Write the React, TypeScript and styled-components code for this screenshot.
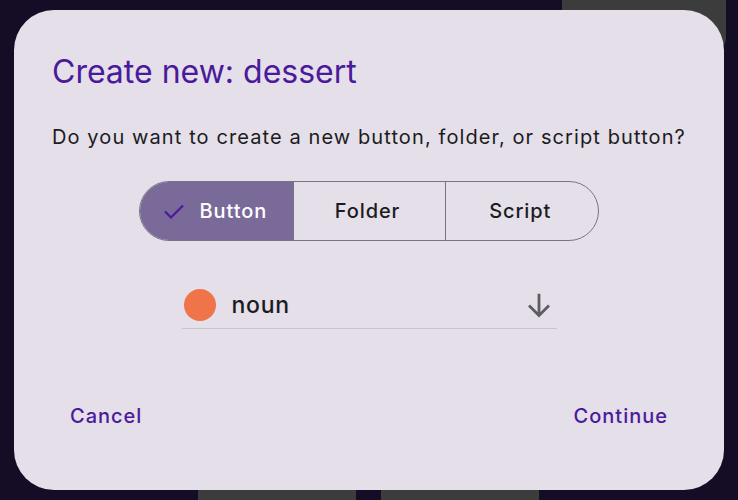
import React, { useState } from "react";
import styled, { createGlobalStyle } from "styled-components";

const GlobalStyle = createGlobalStyle`
  html, body {
    margin: 0;
    padding: 0;
    background: #150d26;
  }
  body {
    font-family: Inter, Roboto, "Liberation Sans", sans-serif;
  }
`;

const Screen = styled.div`
  position: relative;
  width: 738px;
  height: 500px;
  overflow: hidden;
  background: #150d26;
`;

// tiles of the page behind the dialog
const Tile = styled.div<{ $left: number; $top: number; $w: number; $h: number }>`
  position: absolute;
  left: ${(p) => p.$left}px;
  top: ${(p) => p.$top}px;
  width: ${(p) => p.$w}px;
  height: ${(p) => p.$h}px;
  background: #3c3c3c;
  border-radius: 12px;
`;

const Dialog = styled.div`
  position: absolute;
  left: 14px;
  top: 10px;
  width: 710px;
  height: 480px;
  box-sizing: border-box;
  border-radius: 40px;
  background: #e4dfe8;
  padding: 42px 38px 0;
  display: flex;
  flex-direction: column;
`;

const Title = styled.h2`
  margin: 0;
  font-size: 32px;
  line-height: 40px;
  font-weight: 400;
  letter-spacing: 0;
  color: #4a1a9c;
`;

const Message = styled.p`
  margin: 32px 0 0;
  font-size: 20px;
  line-height: 26px;
  letter-spacing: 1.1px;
  white-space: nowrap;
  color: #1c1b1f;
`;

const Segmented = styled.div`
  align-self: center;
  margin-top: 31px;
  display: grid;
  grid-template-columns: repeat(3, 1fr);
  width: 460px;
  height: 60px;
  box-sizing: border-box;
  border: 1px solid #79747e;
  border-radius: 30px;
  overflow: hidden;
`;

const Segment = styled.button<{ $active?: boolean }>`
  display: flex;
  align-items: center;
  justify-content: center;
  gap: 14px;
  border: none;
  border-left: 1px solid #79747e;
  padding: 0 4px 0 0;
  margin: 0;
  background: ${(p) => (p.$active ? "#7a6a9a" : "transparent")};
  color: ${(p) => (p.$active ? "#ffffff" : "#1c1b1f")};
  font-family: Inter, Roboto, "Liberation Sans", sans-serif;
  font-size: 20px;
  font-weight: 500;
  letter-spacing: 0.9px;
  cursor: pointer;

  &:first-child {
    border-left: none;
  }
`;

const Picker = styled.div`
  align-self: center;
  margin-top: 40px;
  width: 375px;
  height: 48px;
  box-sizing: border-box;
  display: flex;
  align-items: center;
  gap: 16px;
  padding: 0 2px 0 2px;
  border-bottom: 1px solid #c9c4cc;
`;

const Dot = styled.span`
  width: 32px;
  height: 32px;
  border-radius: 50%;
  background: #ef744a;
  flex: none;
`;

const PickerLabel = styled.span`
  flex: 1;
  font-size: 23px;
  font-weight: 500;
  letter-spacing: 0.7px;
  color: #1c1b1f;
`;

const Actions = styled.div`
  margin-top: 65px;
  display: flex;
  justify-content: space-between;
`;

const TextButton = styled.button`
  border: none;
  background: transparent;
  padding: 10px 18px;
  font-family: Inter, Roboto, "Liberation Sans", sans-serif;
  font-size: 20px;
  font-weight: 500;
  letter-spacing: 1px;
  color: #4a1a9c;
  cursor: pointer;
`;

const Check = () => (
  <svg width="24" height="24" viewBox="0 0 24 24" fill="none">
    <path d="M3 12.5l6 6L21 6.5" stroke="#4a1a9c" strokeWidth="2.2" />
  </svg>
);

const ArrowDown = () => (
  <svg width="32" height="32" viewBox="0 0 24 24" fill="none">
    <path d="M12 3.5v16M4.5 12.3l7.5 7.5 7.5-7.5" stroke="#5f5c63" strokeWidth="2.1" />
  </svg>
);

const kinds = ["Button", "Folder", "Script"];

export default function App() {
  const [kind, setKind] = useState("Button");

  return (
    <Screen>
      <GlobalStyle />
      <Tile $left={562} $top={-20} $w={164} $h={70} />
      <Tile $left={198} $top={480} $w={158} $h={40} />
      <Tile $left={381} $top={480} $w={158} $h={40} />
      <Dialog>
        <Title>Create new: dessert</Title>
        <Message>Do you want to create a new button, folder, or script button?</Message>
        <Segmented>
          {kinds.map((k) => (
            <Segment key={k} $active={kind === k} onClick={() => setKind(k)}>
              {kind === k && <Check />}
              {k}
            </Segment>
          ))}
        </Segmented>
        <Picker>
          <Dot />
          <PickerLabel>noun</PickerLabel>
          <ArrowDown />
        </Picker>
        <Actions>
          <TextButton>Cancel</TextButton>
          <TextButton>Continue</TextButton>
        </Actions>
      </Dialog>
    </Screen>
  );
}
